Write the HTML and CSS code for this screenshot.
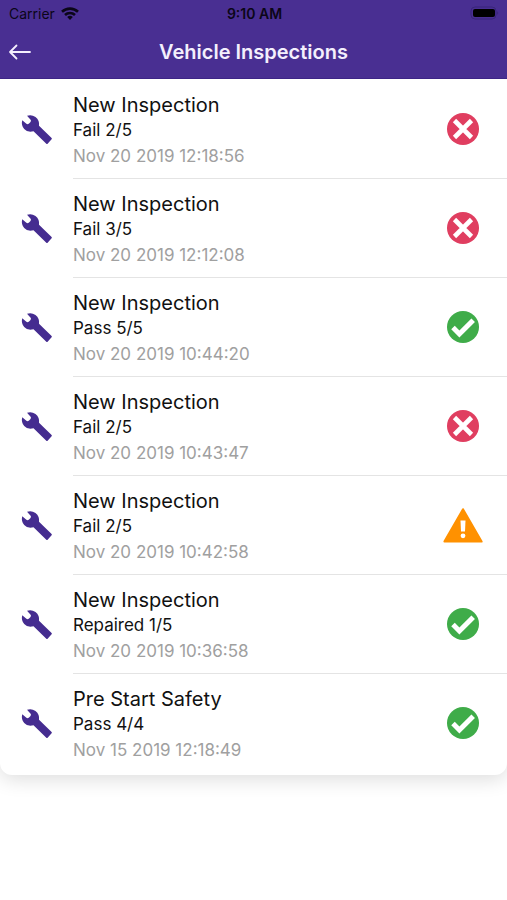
FILE: index.html
```html
<!DOCTYPE html>
<html lang="en">
<head>
<meta charset="utf-8">
<meta name="viewport" content="width=device-width, initial-scale=1">
<title>Vehicle Inspections</title>
<link rel="stylesheet" href="styles.css">
</head>
<body>
<svg class="sprite" aria-hidden="true">
  <symbol id="wrench" viewBox="0 0 38 38"><path fill="currentColor" d="M9 4.800Q13.500 3.200 17.500 6Q21.800 9.500 21 14.800L33.600 27Q34.200 27.600 33.600 28.300L29.600 32.700Q29 33.300 28.300 32.700L15.500 20.300Q9.500 21.800 6.200 18Q3 14.300 4.200 9.200L8.400 12.800Q9.600 13.600 11 12.600L12.500 11Q13.400 9.800 12.600 8.800Z"/></symbol>
  <symbol id="fail" viewBox="0 0 40 40"><circle cx="20" cy="20" r="16" fill="#e03e60"/><path d="M11.500 11.500l17 17M28.500 11.500l-17 17" stroke="#fff" stroke-width="4.600" fill="none"/></symbol>
  <symbol id="pass" viewBox="0 0 40 40"><circle cx="20" cy="20" r="16" fill="#3fac49"/><path d="M10 20.600l6.400 6.400L30.200 13.200" stroke="#fff" stroke-width="5" fill="none"/></symbol>
  <symbol id="warn" viewBox="0 0 40 40"><path d="M20 4.200L38.600 36.600H1.400z" fill="#ff9100" stroke="#ff9100" stroke-width="2" stroke-linejoin="round"/><path d="M17.500 15.500h5l-.5 11h-4z" fill="#fff"/><circle cx="20" cy="30.800" r="2.400" fill="#fff"/></symbol>
</svg>
<header class="header">
  <div class="status">
    <div class="carrier">Carrier
      <svg class="wifi" viewBox="0 0 18 13" aria-hidden="true"><path d="M1 4.800a11.600 11.600 0 0 1 16 0M4 8a7.300 7.300 0 0 1 10 0" fill="none" stroke="currentColor" stroke-width="2.600"/><path d="M6.200 10a4 4 0 0 1 5.600 0L9 12.900z" fill="currentColor"/></svg>
    </div>
    <time class="clock">9:10 AM</time>
    <svg class="battery" viewBox="0 0 30 14" aria-label="Battery full"><rect x="1" y="1" width="25" height="12" rx="4" fill="none" stroke="#39257a"/><rect x="3" y="3" width="22" height="8" rx="2" fill="currentColor"/><path d="M27.500 5q1.500 2 0 4z" fill="#32216a"/></svg>
  </div>
  <nav class="nav">
    <button class="back" type="button" aria-label="Back"><svg class="arrow" viewBox="0 0 24 16" aria-hidden="true"><path d="M22 8H2M8.500 1.500L2 8l6.500 6.500" fill="none" stroke="currentColor" stroke-width="1.800" stroke-linecap="round" stroke-linejoin="round"/></svg></button>
    <h1 class="title">Vehicle Inspections</h1>
  </nav>
</header>
<main>
  <ul class="list">
    <li class="row"><svg class="tool"><use href="#wrench"/></svg><div class="body"><div class="text"><h2 class="name">New Inspection</h2><p class="result">Fail 2/5</p><time class="date">Nov 20 2019 12:18:56</time></div><svg class="mark"><use href="#fail"/></svg></div></li>
    <li class="row"><svg class="tool"><use href="#wrench"/></svg><div class="body"><div class="text"><h2 class="name">New Inspection</h2><p class="result">Fail 3/5</p><time class="date">Nov 20 2019 12:12:08</time></div><svg class="mark"><use href="#fail"/></svg></div></li>
    <li class="row"><svg class="tool"><use href="#wrench"/></svg><div class="body"><div class="text"><h2 class="name">New Inspection</h2><p class="result">Pass 5/5</p><time class="date">Nov 20 2019 10:44:20</time></div><svg class="mark"><use href="#pass"/></svg></div></li>
    <li class="row"><svg class="tool"><use href="#wrench"/></svg><div class="body"><div class="text"><h2 class="name">New Inspection</h2><p class="result">Fail 2/5</p><time class="date">Nov 20 2019 10:43:47</time></div><svg class="mark"><use href="#fail"/></svg></div></li>
    <li class="row"><svg class="tool"><use href="#wrench"/></svg><div class="body"><div class="text"><h2 class="name">New Inspection</h2><p class="result">Fail 2/5</p><time class="date">Nov 20 2019 10:42:58</time></div><svg class="mark"><use href="#warn"/></svg></div></li>
    <li class="row"><svg class="tool"><use href="#wrench"/></svg><div class="body"><div class="text"><h2 class="name">New Inspection</h2><p class="result">Repaired 1/5</p><time class="date">Nov 20 2019 10:36:58</time></div><svg class="mark"><use href="#pass"/></svg></div></li>
    <li class="row"><svg class="tool"><use href="#wrench"/></svg><div class="body"><div class="text"><h2 class="name">Pre Start Safety</h2><p class="result">Pass 4/4</p><time class="date">Nov 15 2019 12:18:49</time></div><svg class="mark"><use href="#pass"/></svg></div></li>
  </ul>
</main>
</body>
</html>
```
FILE: styles.css
```css
* { box-sizing: border-box; }
body {
  margin: 0;
  min-height: 100vh;
  background: #fff;
  color: #111;
  font-family: Inter, "Liberation Sans", sans-serif;
}
h1, h2, p, ul { margin: 0; padding: 0; }
svg { display: block; flex: none; }
.sprite { position: absolute; width: 0; height: 0; }

.header {
  position: relative;
  z-index: 1;
  background: #492f92;
  border-bottom: 1px solid #3d2586;
}
.status {
  display: grid;
  grid-template-columns: 1fr auto 1fr;
  align-items: center;
  height: 26px;
  padding: 0 7px 0 9px;
  color: #0b0618;
  font-size: 14px;
}
.carrier { display: flex; align-items: center; gap: 6px; }
.wifi { width: 18px; height: 13px; }
.clock { font-weight: 600; }
.battery { width: 30px; height: 14px; justify-self: end; color: #000; }
.nav {
  display: grid;
  grid-template-columns: 40px 1fr 40px;
  align-items: center;
  height: 52px;
}
.back {
  display: flex;
  padding: 8px;
  border: 0;
  background: none;
  color: #f4effd;
}
.arrow { width: 24px; height: 16px; }
.title {
  color: #f4effd;
  font-size: 20px;
  line-height: 24px;
  font-weight: 600;
  text-align: center;
}

.list {
  list-style: none;
  padding: 1px 0 2px;
  border-radius: 0 0 12px 12px;
  background: #fff;
  box-shadow: 0 4px 20px rgba(0, 0, 0, 0.14);
}
.row { display: flex; align-items: center; }
.tool { width: 38px; height: 38px; margin: 0 17px 0 18px; color: #452c90; }
.body {
  display: flex;
  flex: 1;
  align-items: center;
  justify-content: space-between;
  padding-right: 24px;
  border-bottom: 1px solid #e4e4e4;
}
.row:last-child .body { border-bottom-color: transparent; }
.text { padding: 12px 0 9px; }
.name { font-size: 20px; line-height: 26px; font-weight: 400; }
.result { font-size: 17px; line-height: 25px; }
.date { display: block; color: #a0a0a0; font-size: 17px; line-height: 26px; }
.mark { width: 40px; height: 40px; }
```
